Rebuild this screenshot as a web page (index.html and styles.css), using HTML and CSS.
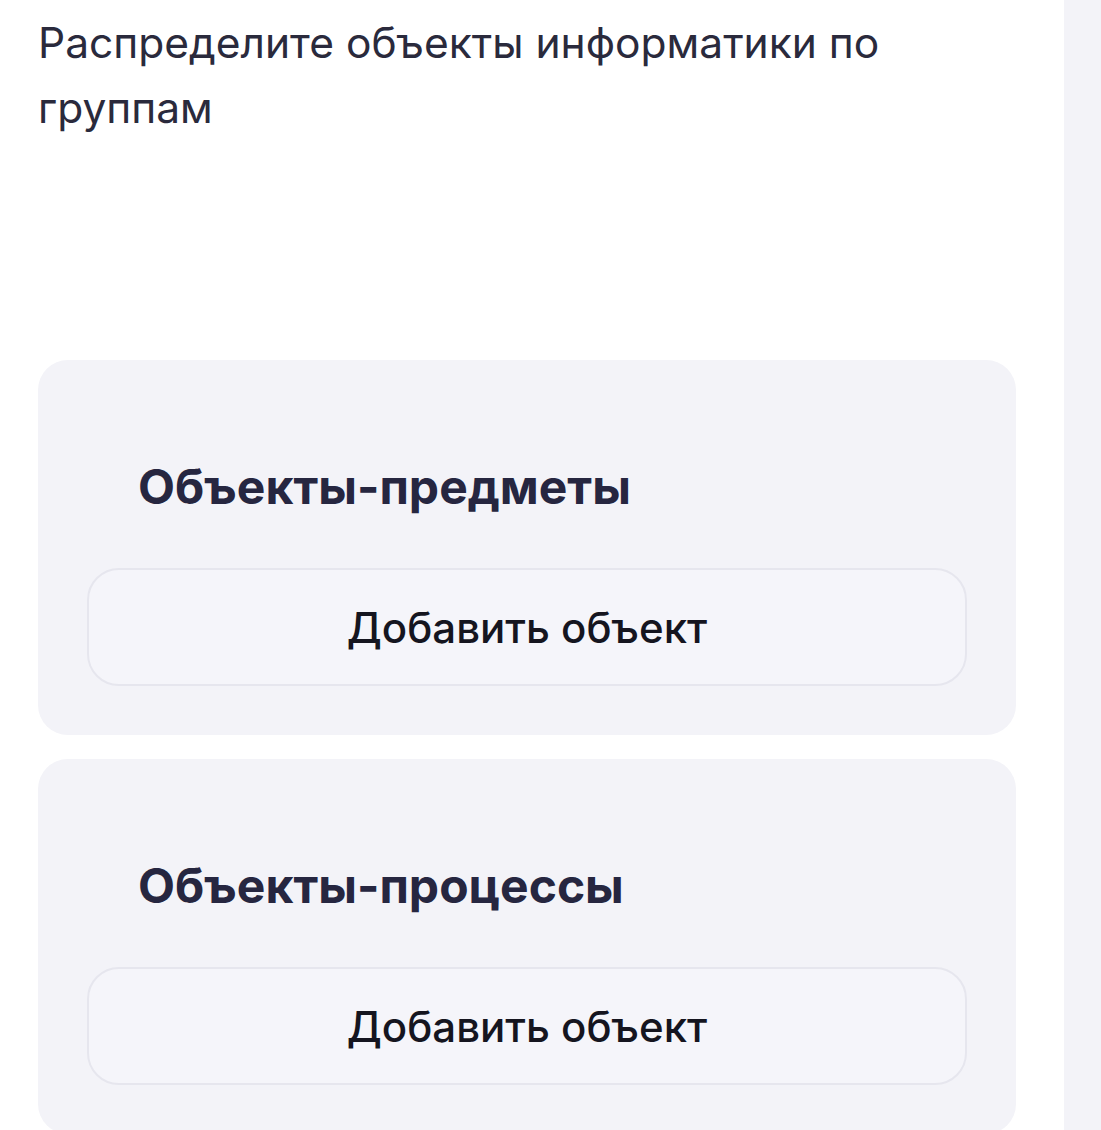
FILE: index.html
```html
<!DOCTYPE html>
<html>
	<head>
		<meta charset="utf-8">
		<title>Распределите объекты</title>
		<link rel="stylesheet" href="styles.css">
	</head>
	<body>
		<div class="page">
			<div class="main">
				<p class="task">Распределите объекты информатики по группам</p>
				<div class="group">
					<h2 class="group-title">Объекты-предметы</h2>
					<button class="add">Добавить объект</button>
				</div>
				<div class="group">
					<h2 class="group-title">Объекты-процессы</h2>
					<button class="add">Добавить объект</button>
				</div>
			</div>
			<div class="side"></div>
		</div>
	</body>
</html>
```

FILE: styles.css
```css
*{
	margin:0;
	padding:0;
	box-sizing:border-box;
}
body{
	font-family:Inter, "Noto Sans", sans-serif;
	background:#ffffff;
	overflow:hidden;
}
.page{
	display:flex;
	height:1130px;
}
.main{
	width:1064px;
	padding:10px 48px 0 38px;
}
.side{
	width:37px;
	background-color:#f3f3f8;
}
.task{
	font-size:42.5px;
	line-height:65px;
	color:#2a2a3c;
	width:900px;
}
.group{
	background-color:#f3f3f8;
	border-radius:30px;
	padding:48px 49px 49px;
	height:375px;
	margin-bottom:24px;
}
.task + .group{
	margin-top:220px;
}
.group-title{
	font-size:48px;
	font-weight:700;
	line-height:55px;
	color:#262640;
	margin:51px 0 54px 51px;
}
.add{
	display:flex;
	align-items:center;
	justify-content:center;
	width:100%;
	height:118px;
	border:2px solid #e6e6ee;
	border-radius:32px;
	background-color:#f5f5fa;
	font-family:Inter, "Noto Sans", sans-serif;
	font-size:42px;
	font-weight:500;
	color:#15151f;
	padding-top:1px;
	cursor:pointer;
}
```
